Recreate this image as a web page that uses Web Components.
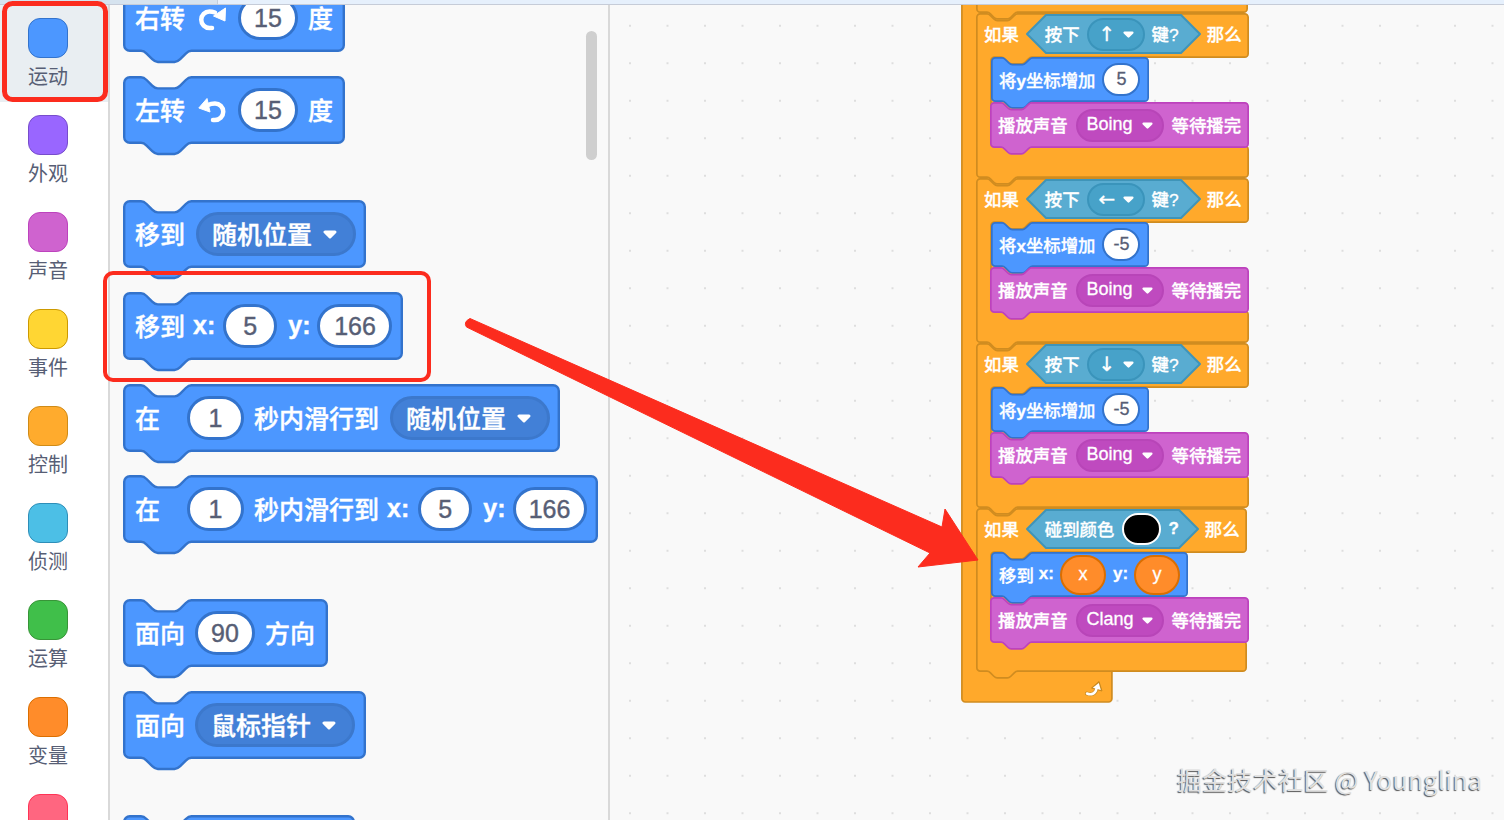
<!DOCTYPE html>
<html lang="zh"><head><meta charset="utf-8"><title>Scratch</title>
<style>
html,body{margin:0;height:820px;overflow:hidden;background:#fff}
body{font-family:"Liberation Sans","Noto Sans CJK SC",sans-serif;display:flex;flex-direction:column;position:relative}
sb-palette{--fs:25px;--ifs:25px;--ih:44px;--ib:3px;--dfs:25px;--thk:.4px;--lb:2px}
sb-workspace{--fs:17.4px;--ifs:18px;--ih:33px;--ib:2px;--dfs:17.4px;--thk:.3px;--lb:1px}
sb-workspace b{font-size:17px}
</style></head><body>
<sb-topbar></sb-topbar>
<sb-main>
<sb-sidebar>
 <sb-cat selected f="#4c97ff" b="#3373cc">运动</sb-cat>
 <sb-cat f="#9966ff" b="#774dcb">外观</sb-cat>
 <sb-cat f="#cf63cf" b="#bd42bd">声音</sb-cat>
 <sb-cat f="#ffd633" b="#cc9900">事件</sb-cat>
 <sb-cat f="#ffab2d" b="#cf8b17">控制</sb-cat>
 <sb-cat f="#4cbfe6" b="#2e8eb8">侦测</sb-cat>
 <sb-cat f="#40bf4a" b="#389438">运算</sb-cat>
 <sb-cat f="#ff8c2a" b="#db6e00">变量</sb-cat>
 <sb-cat f="#ff6680" b="#ff3355"></sb-cat>
</sb-sidebar>
<sb-palette>
 <sb-block w="222" h="68" s="1.4" sw="2.4"><span>右转</span><sb-turn dir="right" style="margin-left:13px"></sb-turn><sb-input style="width:60px;margin-left:12px">15</sb-input><span style="margin-left:10px">度</span></sb-block>
 <sb-block w="222" h="68" s="1.4" sw="2.4"><span>左转</span><sb-turn style="margin-left:13px"></sb-turn><sb-input style="width:60px;margin-left:12px">15</sb-input><span style="margin-left:10px">度</span></sb-block>
 <sb-block style="margin-top:32px" w="243" h="68" s="1.4" sw="2.4"><span>移到</span><sb-drop style="width:160px;margin-left:11px">随机位置</sb-drop></sb-block>
 <sb-block w="280" h="68" s="1.4" sw="2.4"><span>移到</span><b style="margin-left:8px">x:</b><sb-input style="width:54px;margin-left:8px">5</sb-input><b style="margin-left:11px">y:</b><sb-input style="width:75px;margin-left:7px">166</sb-input></sb-block>
 <sb-block w="437" h="68" s="1.4" sw="2.4"><span>在</span><sb-input style="width:57px;margin-left:27px">1</sb-input><span style="margin-left:10px">秒内滑行到</span><sb-drop style="width:160px;margin-left:11px">随机位置</sb-drop></sb-block>
 <sb-block style="margin-top:-1px" w="475" h="68" s="1.4" sw="2.4"><span>在</span><sb-input style="width:57px;margin-left:27px">1</sb-input><span style="margin-left:10px">秒内滑行到</span><b style="margin-left:8px">x:</b><sb-input style="width:54px;margin-left:9px">5</sb-input><b style="margin-left:11px">y:</b><sb-input style="width:74px;margin-left:7px">166</sb-input></sb-block>
 <sb-block style="margin-top:32px" w="205" h="68" s="1.4" sw="2.4"><span>面向</span><sb-input style="width:60px;margin-left:10px">90</sb-input><span style="margin-left:10px">方向</span></sb-block>
 <sb-block w="243" h="68" s="1.4" sw="2.4"><span>面向</span><sb-drop style="width:160px;margin-left:10px">鼠标指针</sb-drop></sb-block>
 <sb-block style="margin-top:32px" w="232" h="68" s="1.4" sw="2.4"></sb-block>
 <sb-scrollbar></sb-scrollbar>
</sb-palette>
<sb-workspace>
 <sb-forever>
  <sb-block kind="control" w="272" h="33" s=".85" sw="1.7"></sb-block>
  <sb-if w="273" foot="31">
   <span slot="head">如果</span>
   <sb-hex slot="head" w="175" style="margin-left:7px"><span>按下</span><sb-drop style="width:58px;margin-left:7px" key="↑"></sb-drop><span style="margin-left:7px">键?</span></sb-hex>
   <span slot="head" style="margin-left:6px">那么</span>
   <sb-block style="margin-top:-1px" w="158" h="45" s=".85" sw="1.7"><span>将<b>y</b>坐标增加</span><sb-input style="width:38px;margin-left:7px">5</sb-input></sb-block>
   <sb-block kind="sound" style="margin-left:-1px" w="259" h="46" s=".85" sw="1.7"><span>播放声音</span><sb-drop style="width:88px;margin-left:8px">Boing</sb-drop><span style="margin-left:8px">等待播完</span></sb-block>
  </sb-if>
  <sb-if w="273" foot="31">
   <span slot="head">如果</span>
   <sb-hex slot="head" w="175" style="margin-left:7px"><span>按下</span><sb-drop style="width:58px;margin-left:7px" key="←"></sb-drop><span style="margin-left:7px">键?</span></sb-hex>
   <span slot="head" style="margin-left:6px">那么</span>
   <sb-block style="margin-top:-1px" w="158" h="45" s=".85" sw="1.7"><span>将<b>x</b>坐标增加</span><sb-input style="width:38px;margin-left:7px">-5</sb-input></sb-block>
   <sb-block kind="sound" style="margin-left:-1px" w="259" h="46" s=".85" sw="1.7"><span>播放声音</span><sb-drop style="width:88px;margin-left:8px">Boing</sb-drop><span style="margin-left:8px">等待播完</span></sb-block>
  </sb-if>
  <sb-if w="273" foot="31">
   <span slot="head">如果</span>
   <sb-hex slot="head" w="175" style="margin-left:7px"><span>按下</span><sb-drop style="width:58px;margin-left:7px" key="↓"></sb-drop><span style="margin-left:7px">键?</span></sb-hex>
   <span slot="head" style="margin-left:6px">那么</span>
   <sb-block style="margin-top:-1px" w="158" h="45" s=".85" sw="1.7"><span>将<b>y</b>坐标增加</span><sb-input style="width:38px;margin-left:7px">-5</sb-input></sb-block>
   <sb-block kind="sound" style="margin-left:-1px" w="259" h="46" s=".85" sw="1.7"><span>播放声音</span><sb-drop style="width:88px;margin-left:8px">Boing</sb-drop><span style="margin-left:8px">等待播完</span></sb-block>
  </sb-if>
  <sb-if w="271" foot="30">
   <span slot="head">如果</span>
   <sb-hex slot="head" w="173" style="margin-left:7px"><span>碰到颜色</span><sb-swatch style="margin-left:8px"></sb-swatch><b style="margin-left:7px">?</b></sb-hex>
   <span slot="head" style="margin-left:6px">那么</span>
   <sb-block style="margin-top:-1px" w="197" h="45" s=".85" sw="1.7"><span>移到</span><b style="margin-left:5px">x:</b><sb-rep style="margin-left:6px">x</sb-rep><b style="margin-left:7px">y:</b><sb-rep style="margin-left:6px">y</sb-rep></sb-block>
   <sb-block kind="sound" style="margin-left:-1px" w="259" h="46" s=".85" sw="1.7"><span>播放声音</span><sb-drop style="width:88px;margin-left:8px">Clang</sb-drop><span style="margin-left:8px">等待播完</span></sb-block>
  </sb-if>
 </sb-forever>
 <sb-watermark>掘金技术社区 @ Younglina</sb-watermark>
</sb-workspace>
</sb-main>
<sb-notes></sb-notes>
<script>
const THEME={
 motion:{f:'#4c97ff',st:'#3373cc',dd:'#4280d7',db:'#3c78cc'},
 sound:{f:'#cf63cf',st:'#bd42bd',dd:'#bf4abf',db:'#b845b8'},
 control:{f:'#ffa92b',st:'#d08c20',dd:'#cf8b17',db:'#cf8b17'}
};
const notch=s=>`c${2*s},0 ${3*s},${s} ${4*s},${2*s} l${4*s},${4*s} c${s},${s} ${2*s},${2*s} ${4*s},${2*s} h${12*s} c${2*s},0 ${3*s},${-s} ${4*s},${-2*s} l${4*s},${-4*s} c${s},${-s} ${2*s},${-2*s} ${4*s},${-2*s} `;
const tab=s=>`c${-2*s},0 ${-3*s},${s} ${-4*s},${2*s} l${-4*s},${4*s} c${-s},${s} ${-2*s},${2*s} ${-4*s},${2*s} h${-12*s} c${-2*s},0 ${-3*s},${-s} ${-4*s},${-2*s} l${-4*s},${-4*s} c${-s},${-s} ${-2*s},${-2*s} ${-4*s},${-2*s} `;
function topEdge(w,s,r){return `M0,${r} a${r},${r} 0 0 1 ${r},${-r} H${12*s} ${notch(s)} H${w-r} a${r},${r} 0 0 1 ${r},${r} `}
function stackPath(w,h,s){const r=4*s;return topEdge(w,s,r)+`V${h-r} a${r},${r} 0 0 1 ${-r},${r} H${48*s} ${tab(s)} H${r} a${r},${r} 0 0 1 ${-r},${-r} Z`}
function cPath(w,H,I,F,arm,s){const r=4*s;return topEdge(w,s,r)+`V${H-r} a${r},${r} 0 0 1 ${-r},${r} H${arm+48*s} ${tab(s)} H${arm+r} a${r},${r} 0 0 0 ${-r},${r} V${H+I-r} a${r},${r} 0 0 0 ${r},${r} H${w-r} a${r},${r} 0 0 1 ${r},${r} V${H+I+F-r} a${r},${r} 0 0 1 ${-r},${r} H${48*s} ${tab(s)} H${r} a${r},${r} 0 0 1 ${-r},${-r} Z`}
function def(name,css,html){
 customElements.define(name,class extends HTMLElement{
  constructor(){super();this.attachShadow({mode:'open'})}
  connectedCallback(){
   const r=typeof html==='function'?html(this):html;
   this.shadowRoot.innerHTML=`<style>${css}</style>${r}`;
  }
 });
}
const LBL=`::slotted(span),::slotted(b){padding-bottom:var(--lb)}`;
def('sb-topbar',`:host{display:flex;height:5px;flex:none;box-sizing:border-box;border-bottom:1px solid #c6ccd8;background:#e6f0fc}
 i{display:block;height:100%;background:#d6e3ef;box-sizing:border-box}i:first-child{width:438px;border-right:1px solid #c2cedb}i:nth-child(2){width:218px;border-right:1px solid #c2cedb}`,`<i></i><i></i>`);
def('sb-main',`:host{display:flex;flex:1;min-height:0}`,`<slot></slot>`);
def('sb-sidebar',`:host{display:flex;flex-direction:column;width:110px;flex:none;box-sizing:border-box;border-right:2px solid #d9d9d9;background:#fff;overflow:hidden}`,`<slot></slot>`);
def('sb-cat',`:host{display:flex;flex-direction:column;align-items:center;flex:none;height:97px;padding:13px 12px 0 0;box-sizing:border-box;font-family:"Noto Sans CJK SC",sans-serif;font-size:20px;line-height:24px;color:#575e75;white-space:nowrap}
 :host([selected]){background:#e9eef2}
 i{display:block;flex:none;width:40px;height:40px;box-sizing:border-box;border-radius:12px;border:1.5px solid;margin-bottom:6px}`,
 h=>`<i style="background:${h.getAttribute('f')};border-color:${h.getAttribute('b')}"></i><slot></slot>`);
def('sb-palette',`:host{display:flex;flex-direction:column;gap:24px;width:500px;flex:none;box-sizing:border-box;padding-left:13px;border-right:2px solid #d9d9d9;background:#f9f9f9;overflow:hidden;position:relative}
 .t{display:block;height:0;margin-bottom:-45px;flex:none}`,`<span class="t"></span><slot></slot>`);
def('sb-scrollbar',`:host{position:absolute;left:476px;top:26px;width:11px;height:129px;border-radius:6px;background:#cfcfcf}`,``);
def('sb-workspace',`:host{display:block;flex:1;position:relative;overflow:hidden;background-color:#f9f9f9;background-image:radial-gradient(circle,#dedede 1px,transparent 1.3px);background-size:37.5px 37.5px;background-position:1.25px 2px}`,`<slot></slot>`);
def('sb-block',`:host{display:block;position:relative;flex:none;color:#fff;font-size:var(--fs);font-weight:500;-webkit-text-stroke:var(--thk) currentColor}
 svg{position:absolute;left:0;top:0;overflow:visible;display:block}
 .c{position:relative;display:flex;align-items:center;box-sizing:border-box;height:100%;padding-left:var(--pl);white-space:nowrap}${LBL}`,
 h=>{const w=+h.getAttribute('w'),H=+h.getAttribute('h'),s=+h.getAttribute('s'),sw=+h.getAttribute('sw'),t=THEME[h.getAttribute('kind')||'motion'];
  h.style.width=w+'px';h.style.height=H+'px';
  for(const k in t)h.style.setProperty('--'+k,t[k]);
  h.style.setProperty('--pl',(s>1?12:8)+'px');
  return `<svg width="${w}" height="${H}"><path transform="translate(${sw/2},${sw/2})" d="${stackPath(w-sw,H-sw,s)}" fill="${t.f}" stroke="${t.st}" stroke-width="${sw}"/></svg><div class="c"><slot></slot></div>`});
def('sb-if',`:host{display:block;position:relative;flex:none;color:#fff;font-size:var(--fs);font-weight:500;-webkit-text-stroke:var(--thk) currentColor}
 svg{position:absolute;left:0;top:0;overflow:visible}
 .h{position:relative;display:flex;align-items:center;height:42px;margin-bottom:3px;box-sizing:border-box;padding-left:8px;white-space:nowrap}
 .i{position:relative;display:flex;flex-direction:column;align-items:flex-start;padding-left:15px}${LBL}`,
 h=>{const w=+h.getAttribute('w'),F=+h.getAttribute('foot'),sw=1.7,t=THEME.control,H=45,I=89;
  h.style.width=w+'px';h.style.height=(H+I+F)+'px';
  for(const k in t)h.style.setProperty('--'+k,t[k]);
  return `<svg width="${w}" height="${H+I+F}"><path transform="translate(${sw/2},${sw/2})" d="${cPath(w-sw,H-sw,I,F,15-sw/2,.85)}" fill="${t.f}" stroke="${t.st}" stroke-width="${sw}"/></svg><div class="h"><slot name="head"></slot></div><div class="i"><slot></slot></div>`});
def('sb-forever',`:host{position:absolute;left:351px;top:-25px;width:287px;height:723px;display:flex;flex-direction:column;padding-left:15px;box-sizing:border-box}
 svg.b{position:absolute;left:0;top:0;overflow:visible}
 svg.a{position:absolute;left:124px;top:700px}`,
 ()=>`<svg class="b" width="151" height="723"><rect x=".9" y="-20" width="150" height="742" rx="3.4" fill="#ffa92b" stroke="#d08c20" stroke-width="1.7"/></svg><slot></slot>
 <svg class="a" width="18" height="17" viewBox="0 0 18 17"><path d="M2 13.500c4 1.800 8.500.5 9.500-5" fill="none" stroke="#c98a20" stroke-width="4" stroke-linecap="round"/><path d="M6.500 8 14 1.500 17 11z" fill="#c98a20" stroke="#c98a20" stroke-linejoin="round"/><path d="M2 13.500c4 1.800 8.500.5 9.500-5" fill="none" stroke="#fff" stroke-width="2.500" stroke-linecap="round"/><path d="M7.800 7.800 13.800 3 15.800 10z" fill="#fff"/></svg>`);
def('sb-input',`:host{display:inline-flex;align-items:center;justify-content:center;flex:none;box-sizing:border-box;height:var(--ih);border:var(--ib) solid var(--st);border-radius:999px;background:#fff;color:#575e75;font-size:var(--ifs);font-weight:400;-webkit-text-stroke:var(--thk) #575e75}`,`<slot></slot>`);
def('sb-drop',`:host{display:inline-flex;align-items:center;justify-content:space-between;flex:none;box-sizing:border-box;height:var(--ih);border:var(--ib) solid var(--db);border-radius:999px;background:var(--dd);font-size:var(--dfs);color:#fff}
 svg{display:block;flex:none}.t{padding-bottom:var(--lb)}.t.big{font-family:"DejaVu Sans",sans-serif;font-size:20px;line-height:1;margin-left:1px}`,
 h=>{const k=h.getAttribute('key');const small=!!h.closest('sb-workspace');
  h.style.padding=small?'0 9px':'0 16px 0 13px';
  if(small&&!k)h.style.fontSize='18px';
  return `${k?`<span class="t big">${k}</span>`:'<span class="t"><slot></slot></span>'}<svg width="${small?11:14}" height="${small?7:9}" viewBox="0 0 14 9"><path d="M2 2h10L7 7z" fill="#fff" stroke="#fff" stroke-width="3" stroke-linejoin="round"/></svg>`});
def('sb-rep',`:host{display:inline-flex;align-items:center;justify-content:center;flex:none;box-sizing:border-box;width:46px;height:40px;border:2px solid #db6e00;border-radius:20px;background:#ff8c2a;color:#fff;font-size:18px;font-weight:400}`,`<slot></slot>`);
def('sb-swatch',`:host{display:block;flex:none;box-sizing:border-box;width:39px;height:32px;border:2px solid #fff;border-radius:16px;background:#000}`,``);
def('sb-hex',`:host{display:inline-flex;align-items:center;position:relative;flex:none;box-sizing:border-box;height:40px;padding-left:19px;--dd:#47a2c9;--db:#3a94bb;--ih:33px;--st:#2e8eb8}
 svg{position:absolute;left:0;top:0;overflow:visible}.w{position:relative;display:inline-flex;align-items:center;white-space:nowrap}${LBL}`,
 h=>{const w=+h.getAttribute('w');h.style.width=w+'px';
  return `<svg width="${w}" height="40"><path d="M1 20 20 1H${w-20}L${w-1} 20 ${w-20} 39H20Z" fill="#59acd1" stroke="#3f94b8" stroke-width="2" stroke-linejoin="round"/></svg><span class="w"><slot></slot></span>`});
def('sb-turn',`:host{display:block;flex:none;width:28px;height:28px}svg{display:block;overflow:visible}`,
 h=>h.getAttribute('dir')==='right'
 ?`<svg width="28" height="28" viewBox="0 0 28 28"><path d="M17 8.500C15 7.800 13.500 7.500 11.500 7.500a8.250 8.250 0 0 0 0 16.500h2.500" fill="none" stroke="#fff" stroke-width="4.500" stroke-linecap="round"/><path d="M27.500 4 27 17 15.500 12z" fill="#fff" stroke="#fff" stroke-linejoin="round"/></svg>`
 :`<svg width="28" height="28" viewBox="0 0 28 28"><path d="M10 9C12 8 14 7.500 17 7.500a8.250 8.250 0 0 1 0 16.500h-2" fill="none" stroke="#fff" stroke-width="4.500" stroke-linecap="round"/><path d="M.8 12 9 2.500 12 16z" fill="#fff" stroke="#fff" stroke-linejoin="round"/></svg>`);
def('sb-watermark',`:host{position:absolute;left:567px;top:757px;font-family:"Noto Sans CJK SC",sans-serif;font-size:25px;line-height:34px;letter-spacing:.3px;color:#e0e0e0;white-space:nowrap;text-shadow:-1px 1px 1px #555}`,`<slot></slot>`);
def('sb-notes',`:host{position:absolute;left:0;top:0;width:1504px;height:820px;pointer-events:none}svg{display:block}`,
 `<svg width="1504" height="820">
 <rect x="4.500" y="3.500" width="101" height="96" rx="8" fill="none" stroke="#fc2c1e" stroke-width="5"/>
 <rect x="105" y="273" width="324" height="107" rx="8" fill="none" stroke="#fc2c1e" stroke-width="4"/>
 <path d="M470 318.500 942 527 945 509 978 560 918 567 930 553 466.500 327Q463 322 470 318.500Z" fill="#fc2c1e" stroke="#fc2c1e" stroke-width="1" stroke-linejoin="round"/>
 </svg>`);
</script>
</body></html>
